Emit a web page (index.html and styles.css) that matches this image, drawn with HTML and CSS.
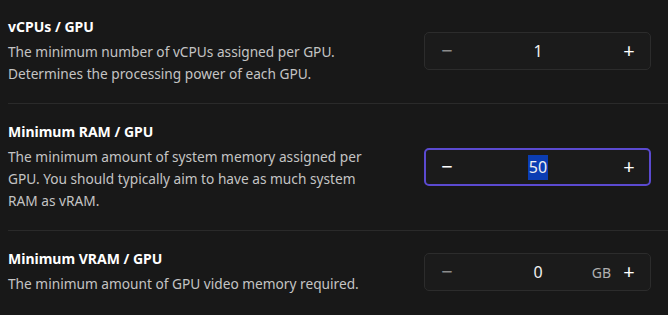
FILE: index.html
```html
<!DOCTYPE html>
<html lang="en">

<head>
    <meta charset="UTF-8">
    <meta name="viewport" content="width=device-width, initial-scale=1.0">
    <title>GPU Requirements</title>
    <link rel="stylesheet" href="styles.css">
</head>

<body>
    <div class="settings">
        <div class="row">
            <div class="info">
                <div class="title">vCPUs / GPU</div>
                <div class="desc">The minimum number of vCPUs assigned per GPU.<br>Determines the processing power of each GPU.</div>
            </div>
            <div class="stepper">
                <span class="btn muted">&minus;</span>
                <span class="value">1</span>
                <span class="btn">+</span>
            </div>
        </div>
        <div class="row">
            <div class="info">
                <div class="title">Minimum RAM / GPU</div>
                <div class="desc">The minimum amount of system memory assigned per<br>GPU. You should typically aim to have as much system<br>RAM as vRAM.</div>
            </div>
            <div class="stepper focused">
                <span class="btn">&minus;</span>
                <span class="value"><span class="selected">50</span></span>
                <span class="btn">+</span>
            </div>
        </div>
        <div class="row">
            <div class="info">
                <div class="title">Minimum VRAM / GPU</div>
                <div class="desc">The minimum amount of GPU video memory required.</div>
            </div>
            <div class="stepper">
                <span class="btn muted">&minus;</span>
                <span class="value">0</span>
                <span class="unit">GB</span>
                <span class="btn">+</span>
            </div>
        </div>
    </div>
</body>

</html>
```

FILE: styles.css
```css
body {
    margin: 0;
    background-color: #181818;
    font-family: "Noto Sans", "Open Sans", sans-serif;
    color: #fff;
}
.settings {
    padding-left: 8px;
}
.row {
    display: flex;
    justify-content: space-between;
    align-items: center;
    padding: 17px 17px 18px 0;
    border-bottom: 1px solid #2a2a2a;
}
.row + .row {
    padding-top: 18px;
}
.row:last-child {
    border-bottom: none;
}
.title {
    font-size: 14px;
    font-weight: bold;
    line-height: 20px;
    margin-bottom: 4px;
}
.desc {
    font-size: 13.7px;
    line-height: 22px;
    color: #c4c4c4;
}
.stepper {
    display: flex;
    align-items: center;
    box-sizing: border-box;
    width: 227px;
    height: 38px;
    padding: 0 14px 0 15px;
    border: 1px solid #2c2c2c;
    border-radius: 5px;
    background-color: #1b1b1b;
    position: relative;
}
.stepper.focused {
    border: 2px solid #5b4ad0;
    padding: 0 13px 0 14px;
}
.btn {
    width: 14px;
    font-size: 20px;
    line-height: 20px;
    text-align: center;
    color: #fff;
}
.btn.muted {
    color: #8c8c8c;
}
.value {
    flex: 1;
    text-align: center;
    font-size: 16px;
    color: #f0f0f0;
}
.selected {
    display: inline-block;
    background-color: #0b3db3;
    line-height: 25px;
    padding: 0 1px;
}
.unit {
    position: absolute;
    right: 39px;
    font-size: 14px;
    color: #b0b0b0;
}
```
